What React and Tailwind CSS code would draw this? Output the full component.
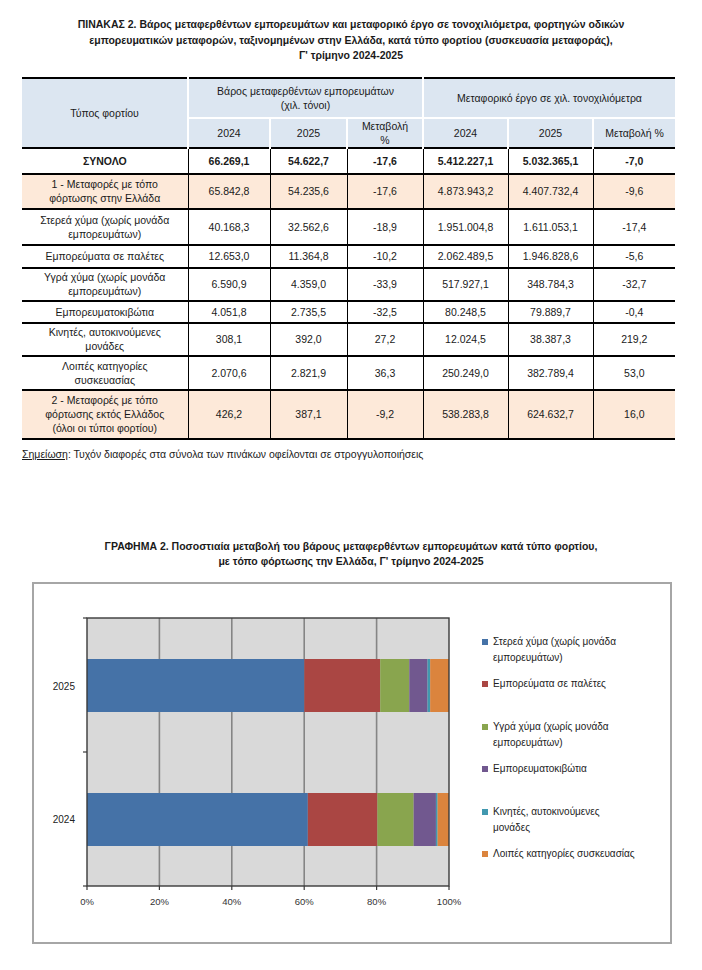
import React from 'react';

const font = { fontFamily: '"Liberation Sans", Arial, sans-serif' };

const rows = [
  { label: 'ΣΥΝΟΛΟ', v: ['66.269,1', '54.622,7', '-17,6', '5.412.227,1', '5.032.365,1', '-7,0'], bold: true, h: 'h-[26px]' },
  { label: ['1 - Μεταφορές με τόπο', 'φόρτωσης στην Ελλάδα'], v: ['65.842,8', '54.235,6', '-17,6', '4.873.943,2', '4.407.732,4', '-9,6'], peach: true, h: 'h-[35px]' },
  { label: ['Στερεά χύμα (χωρίς μονάδα', 'εμπορευμάτων)'], v: ['40.168,3', '32.562,6', '-18,9', '1.951.004,8', '1.611.053,1', '-17,4'], h: 'h-[36px]' },
  { label: 'Εμπορεύματα σε παλέτες', v: ['12.653,0', '11.364,8', '-10,2', '2.062.489,5', '1.946.828,6', '-5,6'], h: 'h-[23px]' },
  { label: ['Υγρά χύμα (χωρίς μονάδα', 'εμπορευμάτων)'], v: ['6.590,9', '4.359,0', '-33,9', '517.927,1', '348.784,3', '-32,7'], h: 'h-[33px]' },
  { label: 'Εμπορευματοκιβώτια', v: ['4.051,8', '2.735,5', '-32,5', '80.248,5', '79.889,7', '-0,4'], h: 'h-[22px]' },
  { label: ['Κινητές, αυτοκινούμενες', 'μονάδες'], v: ['308,1', '392,0', '27,2', '12.024,5', '38.387,3', '219,2'], h: 'h-[33px]' },
  { label: ['Λοιπές κατηγορίες', 'συσκευασίας'], v: ['2.070,6', '2.821,9', '36,3', '250.249,0', '382.789,4', '53,0'], h: 'h-[34px]' },
  { label: ['2 - Μεταφορές με τόπο', 'φόρτωσης εκτός Ελλάδος', '(όλοι οι τύποι φορτίου)'], v: ['426,2', '387,1', '-9,2', '538.283,8', '624.632,7', '16,0'], peach: true, h: 'h-[49px]' },
];

const series = [
  { name: ['Στερεά χύμα (χωρίς μονάδα', 'εμπορευμάτων)'], color: '#4572a7', y24: 40168.3, y25: 32562.6 },
  { name: ['Εμπορεύματα σε παλέτες'], color: '#aa4643', y24: 12653.0, y25: 11364.8 },
  { name: ['Υγρά χύμα (χωρίς μονάδα', 'εμπορευμάτων)'], color: '#89a54e', y24: 6590.9, y25: 4359.0 },
  { name: ['Εμπορευματοκιβώτια'], color: '#71588f', y24: 4051.8, y25: 2735.5 },
  { name: ['Κινητές, αυτοκινούμενες', 'μονάδες'], color: '#4198af', y24: 308.1, y25: 392.0 },
  { name: ['Λοιπές κατηγορίες συσκευασίας'], color: '#db843d', y24: 2070.6, y25: 2821.9 },
];

// plot area inside the svg
const PX = 53, PY = 34, PW = 362, PH = 268;

function Segments({ year, y }) {
  const total = series.reduce((s, d) => s + d[year], 0);
  let acc = 0;
  return series.map((d) => {
    const x = PX + (acc / total) * PW;
    acc += d[year];
    const w = (d[year] / total) * PW;
    return <rect key={d.color} x={x} y={y} width={w} height={53} fill={d.color} />;
  });
}

function Chart() {
  return (
    <svg width="440" height="340" style={font} className="shrink-0">
      <rect x={PX} y={PY} width={PW} height={PH} fill="#d9d9d9" />
      {[1, 2, 3, 4].map((i) => (
        <line key={i} x1={PX + (PW / 5) * i} x2={PX + (PW / 5) * i} y1={PY} y2={PY + PH} stroke="#858585" strokeWidth="1.6" />
      ))}
      <Segments year="y25" y={75} />
      <Segments year="y24" y={209} />
      <rect x={PX} y={PY} width={PW} height={PH} fill="none" stroke="#3a3a3a" strokeWidth="1.4" />
      {[PY, PY + PH / 2, PY + PH].map((ty) => (
        <line key={ty} x1={PX - 4} x2={PX} y1={ty} y2={ty} stroke="#3a3a3a" strokeWidth="1.2" />
      ))}
      {[0, 1, 2, 3, 4, 5].map((i) => (
        <g key={i}>
          <line x1={PX + (PW / 5) * i} x2={PX + (PW / 5) * i} y1={PY + PH} y2={PY + PH + 4} stroke="#3a3a3a" strokeWidth="1.2" />
          <text x={PX + (PW / 5) * i} y={PY + PH + 19} textAnchor="middle" fontSize="9.5" fill="#333">{i * 20}%</text>
        </g>
      ))}
      <text x={41} y={106} textAnchor="end" fontSize="10" fill="#222">2025</text>
      <text x={41} y={239} textAnchor="end" fontSize="10" fill="#222">2024</text>
    </svg>
  );
}

export default function App() {
  const cell = 'border-r-[1.5px] border-black text-center align-middle px-1';
  return (
    <div className="w-[702px] h-[970px] bg-white text-[#1a1a1a] pt-[17px]" style={font}>
      <h1 className="text-[10.5px] font-bold leading-[15.5px] text-center px-12">
        ΠΙΝΑΚΑΣ 2. Βάρος μεταφερθέντων εμπορευμάτων και μεταφορικό έργο σε τονοχιλιόμετρα, φορτηγών οδικών<br />
        εμπορευματικών μεταφορών, ταξινομημένων στην Ελλάδα, κατά τύπο φορτίου (συσκευασία μεταφοράς),<br />
        Γ' τρίμηνο 2024-2025
      </h1>

      <table className="mt-[13px] ml-[22px] w-[653px] table-fixed border-collapse text-[10.5px] leading-[14px]">
        <colgroup>
          <col className="w-[166px]" />
          <col className="w-[82px]" />
          <col className="w-[77px]" />
          <col className="w-[76px]" />
          <col className="w-[85px]" />
          <col className="w-[85px]" />
          <col className="w-[82px]" />
        </colgroup>
        <thead className="bg-[#dce6f1]">
          <tr className="h-[40px] border-t-[2.5px] border-black">
            <th rowSpan={2} className="font-normal text-center border-r-2 border-white">Τύπος φορτίου</th>
            <th colSpan={3} className="font-normal text-center border-r-2 border-b-2 border-white">
              Βάρος μεταφερθέντων εμπορευμάτων<br />(χιλ. τόνοι)
            </th>
            <th colSpan={3} className="font-normal text-center border-b-2 border-white">Μεταφορικό έργο σε χιλ. τονοχιλιόμετρα</th>
          </tr>
          <tr className="h-[29px] border-b-[2.5px] border-black">
            <th className="font-normal border-r-2 border-white">2024</th>
            <th className="font-normal border-r-2 border-white">2025</th>
            <th className="font-normal border-r-2 border-white">Μεταβολή<br />%</th>
            <th className="font-normal border-r-2 border-white">2024</th>
            <th className="font-normal border-r-2 border-white">2025</th>
            <th className="font-normal">Μεταβολή %</th>
          </tr>
        </thead>
        <tbody>
          {rows.map((r, i) => (
            <tr key={i} className={`${r.h} border-b-2 border-black ${r.peach ? 'bg-[#fde9d9]' : ''} ${r.bold ? 'font-bold' : ''}`}>
              <td className="text-center align-middle px-1 border-r-[1.5px] border-black">
                {Array.isArray(r.label) ? r.label.map((l, j) => <div key={j}>{l}</div>) : r.label}
              </td>
              {r.v.map((v, j) => (
                <td key={j} className={j === 5 ? 'text-center align-middle px-1' : cell}>{v}</td>
              ))}
            </tr>
          ))}
        </tbody>
      </table>

      <p className="ml-[22px] mt-[7px] text-[10.5px] leading-[14px]">
        <span className="underline">Σημείωση</span>: Τυχόν διαφορές στα σύνολα των πινάκων οφείλονται σε στρογγυλοποιήσεις
      </p>

      <h2 className="mt-[78px] text-[10.5px] font-bold leading-[15px] text-center">
        ΓΡΑΦΗΜΑ 2. Ποσοστιαία μεταβολή του βάρους μεταφερθέντων εμπορευμάτων κατά τύπο φορτίου,<br />
        με τόπο φόρτωσης την Ελλάδα, Γ' τρίμηνο 2024-2025
      </h2>

      <div className="mt-[13px] ml-[32px] w-[640px] h-[362px] border-2 border-[#a6a6a6] flex">
        <Chart />
        <ul className="mt-[50px] ml-[8px] flex flex-col text-[10px] leading-[16px] text-[#222]">
          {series.map((s) => (
            <li key={s.color} className="h-[42.6px] flex gap-[5px]">
              <span className="mt-[5px] w-[6px] h-[6px] shrink-0" style={{ backgroundColor: s.color }} />
              <span>{s.name.map((n, j) => <div key={j}>{n}</div>)}</span>
            </li>
          ))}
        </ul>
      </div>
    </div>
  );
}
